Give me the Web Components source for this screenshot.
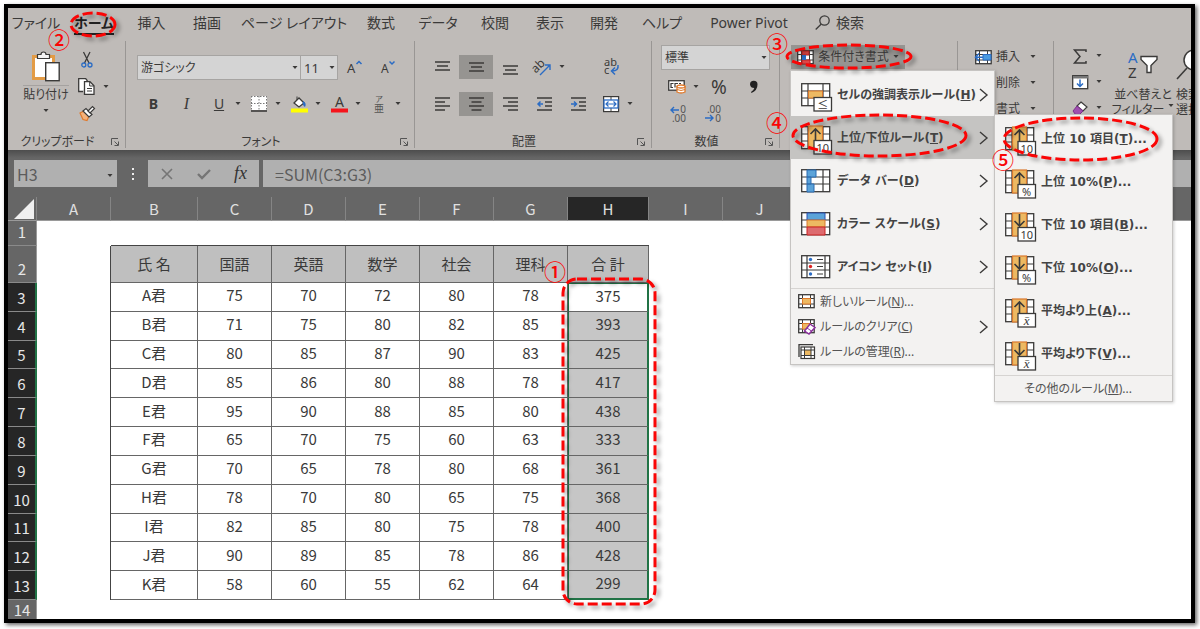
<!DOCTYPE html>
<html lang="ja">
<head>
<meta charset="utf-8">
<title>Excel - 条件付き書式</title>
<style>
  body {
    margin: 0;
    background: #fff;
    color: #3b3a39;
    font: 12px/16px "Noto Sans", "Noto Sans CJK JP", sans-serif;
    font-feature-settings: "palt";
  }
</style>
</head>
<body>
<excel-window></excel-window>

<script>
/* ---------- icons ---------- */
const K = '#3b3a39', B = '#2b6cc4';
const lines = (rows, x0 = 0) => rows.map(([x, y, w]) => `<path d="M${x0 + x} ${y}h${w}"/>`).join('');
const stroke = (inner, c = K, w = 1.5) => `<g fill="none" stroke="${c}" stroke-width="${w}">${inner}</g>`;

const bigGrid = `<rect x=".7" y=".7" width="28" height="22" fill="#fff" stroke="${K}" stroke-width="1.3"/>`;
const bigLines = stroke('<path d="M7 1v22M22 1v22M1 8h28M1 15h28"/>', K, 1.2);
const badge = t => `<rect x="13" y="14.5" width="17.5" height="13.5" fill="#fff" stroke="${K}" stroke-width="1.3"/>
  <text x="21.7" y="25.500" font-size="11" text-anchor="middle" fill="${K}">${t}</text>`;
const rank = (up, t) => bigGrid + bigLines +
  `<rect x="7.500" y="0" width="14" height="23" fill="#edb962" stroke="#d9782d" stroke-width="1.2"/>` +
  stroke(up ? '<path d="M14.500 14V3M9.500 8l5-5 5 5"/>' : '<path d="M14.500 1v11M9.500 8l5 5 5-5"/>', K, 1.6) + badge(t);
const xbar = '<tspan font-family="Liberation Serif" font-style="italic" font-size="13">x̄</tspan>';
const smallGrid = `<rect x=".7" y=".7" width="15.500" height="13" fill="#fff" stroke="${K}" stroke-width="1.3"/>
  <path d="M4.500 1v13M12.500 1v13M1 4.500h15M1 10h15" stroke="${K}" fill="none"/>`;

/* name: [width, height, markup] */
const ICONS = {
  paste: [28, 31, `<path d="M1.500 5.500h20v22h-20z" fill="#fff" stroke="#e39b45" stroke-width="3"/>
    <path d="M5.500 7.500v-4h3.500a2.500 2.500 0 0 1 5 0h3.500v4z" fill="#f4f4f4" stroke="${K}" stroke-width="1.2"/>
    <rect x="13.700" y="11.700" width="13.500" height="18" fill="#fff" stroke="${K}" stroke-width="1.4"/>`],
  cut: [12, 16, `<path d="M2.500 0l5.500 11M9 0L3.500 11" stroke="${K}" stroke-width="1.300" fill="none"/>
    <circle cx="2.800" cy="13" r="2" fill="none" stroke="${B}" stroke-width="1.300"/><circle cx="9" cy="13" r="2" fill="none" stroke="${B}" stroke-width="1.300"/>`],
  copy: [18, 17, `<path d="M5 13.500H.7V.7h7L9.500 3" fill="#fff" stroke="${K}" stroke-width="1.300"/>
    <path d="M6.500 3.700h5.500l4 4v8.600H6.500z" fill="#fff" stroke="${K}" stroke-width="1.300"/>
    <path d="M11.700 4v4H16M9 10.500h5M9 13h5" stroke="${K}" fill="none"/>`],
  brush: [16, 15, `<path d="M1 7l4-2 5 5-2 4.500-4-1z" fill="#f6b27a" stroke="#e07a2c" stroke-width="1.200"/>
    <path d="M4 5l3-2.500 6 6-3 2.500z" fill="#fff" stroke="${K}" stroke-width="1.200"/><path d="M9 5l4.500-4.500 2 2L11 7z" fill="#fff" stroke="${K}" stroke-width="1.200"/>`],
  launcher: [8, 8, stroke('<path d="M.5 7V.500H7M3.500 3.500L7 7M7.500 3.500v4h-4"/>', '#555', 1)],
  caret: [6, 4, `<path d="M.500 0h5L3 3z" fill="${K}"/>`],
  grow: [16, 16, `<text x="0" y="13" font-size="13" fill="${K}">A</text>` + stroke('<path d="M9.500 4L12 1.500 14.500 4"/>', B)],
  shrink: [16, 16, `<text x="1" y="13" font-size="12" fill="${K}">A</text>` + stroke('<path d="M9.500 1.500L12 4l2.500-2.500"/>', B)],
  borders: [16, 16, `<path d="M0 0h16v14H0z" fill="#fff"/>` + `<path d="M.5 0v14M15.500 0v14M0 .5h16M8 0v14M0 7.500h16" stroke="#777" stroke-dasharray="1.500 1.500" fill="none"/><path d="M0 15h16" stroke="${K}" stroke-width="1.600"/>`],
  fill: [17, 17, `<path d="M3 7l5-5 5 5-5 4z" fill="#fff" stroke="${K}" stroke-width="1.300"/><path d="M6 4V.500" stroke="${K}"/><path d="M12 5q4 2 2 6-3-2-2-6" fill="${B}"/><path d="M0 12.500h17v4H0z" fill="#ff0"/>`],
  fontcolor: [17, 17, `<text x="8.500" y="11" font-size="14" text-anchor="middle" fill="${K}">A</text><path d="M0 12.500h17v4H0z" fill="#f5141c"/>`],
  ruby: [12, 18, `<text x="6" y="7" font-size="8" text-anchor="middle" fill="#555">ア</text><text x="6" y="17" font-size="10" text-anchor="middle" fill="#555">亜</text>`],
  top: [15, 16, stroke(lines([[0, 3, 15], [2, 7, 11], [0, 11, 15]]))],
  middle: [15, 16, stroke(lines([[0, 4, 15], [2, 8, 11], [0, 12, 15]]))],
  bottom: [15, 16, stroke(lines([[0, 7, 15], [2, 11, 11], [0, 15, 15]]))],
  left: [15, 16, stroke(lines([[0, 2, 15], [0, 6, 10], [0, 10, 15], [0, 14, 10]]))],
  center: [15, 16, stroke(lines([[0, 2, 15], [2.5, 6, 10], [0, 10, 15], [2.5, 14, 10]]))],
  right: [15, 16, stroke(lines([[0, 2, 15], [5, 6, 10], [0, 10, 15], [5, 14, 10]]))],
  orient: [18, 18, `<text x="-1" y="11" font-size="12" fill="${K}" transform="rotate(-45 6 10)">ab</text>` + stroke('<path d="M6 17L16 7M11 7h5v5"/>', B, 1.400)],
  wrap: [16, 18, `<text x="0" y="8" font-size="11" fill="${K}">ab</text><text x="0" y="16" font-size="11" fill="${K}">c</text>` + stroke('<path d="M14 7q1 6-6 6M11 9.500L7.500 13l3.500 3.500"/>', B)],
  outdent: [15, 16, stroke(lines([[0, 2, 15], [8, 6, 7], [8, 10, 7], [0, 14, 15]])) + stroke('<path d="M6 8H1M3.500 5.500L1 8l2.500 2.500"/>', B)],
  indent: [15, 16, stroke(lines([[0, 2, 15], [8, 6, 7], [8, 10, 7], [0, 14, 15]])) + stroke('<path d="M0 8h5M3 5.500L5.500 8 3 10.500"/>', B)],
  merge: [16, 16, `<rect x=".6" y=".6" width="15" height="15" fill="#fff" stroke="${K}" stroke-width="1.200"/><path d="M8 0v4M8 12v4" stroke="${K}"/>
    <rect x="1" y="4" width="14" height="8" fill="#fff" stroke="${B}" stroke-width="1.300"/>` + stroke('<path d="M3 8h10M5.500 5.500L3 8l2.500 2.500M10.500 5.500L13 8l-2.500 2.500"/>', B, 1.200)],
  money: [18, 15, `<rect x=".7" y="1.700" width="15.500" height="9.500" fill="#fff" stroke="${K}" stroke-width="1.300"/>` + stroke('<path d="M5.500 4.500H3v4h2M7 8.500v-4h3M13 4.500h-2"/>', K, 1.200) +
    `<path d="M9 7.500v5.500q4 2 8 0V7.500z" fill="#fff" stroke="#e07a2c" stroke-width="1.300"/><ellipse cx="13" cy="7.500" rx="4" ry="1.500" fill="#fff" stroke="#e07a2c" stroke-width="1.300"/><path d="M9 10.500q4 2 8 0" fill="none" stroke="#e07a2c"/>`],
  percent: [18, 18, `<text x="9" y="16" font-size="19" text-anchor="middle" fill="${K}">%</text>`],
  comma: [10, 16, `<path d="M1 5.500a3.500 3.500 0 1 1 7.500 0q0 6-6 8.500l-.5-1q3-2 3.300-4Q1.500 9 1 5.500" fill="#222"/>`],
  decinc: [17, 18, `<text x="17" y="8" font-size="10" text-anchor="end" fill="#555">0</text><text x="17" y="17" font-size="10" text-anchor="end" fill="#555">.00</text>` + stroke('<path d="M10 5H2M5 2L2 5l3 3"/>', B, 1.400)],
  decdec: [17, 18, `<text x="17" y="8" font-size="10" text-anchor="end" fill="#555">.00</text><text x="17" y="17" font-size="10" text-anchor="end" fill="#555">0</text>` + stroke('<path d="M1 13h8M6 10l3 3-3 3"/>', B, 1.400)],
  cond: [17, 15, smallGrid + `<path d="M5 1h7v4H5zM5 10h8v4H5z" fill="#e04848" stroke="#b22"/><path d="M5 5h4v5H5z" fill="${B}"/>`],
  insert: [17, 15, smallGrid + `<path d="M8 4.500h8v5.500H8z" fill="#4c9be0" stroke="${B}"/><path d="M8 7.300H0M4 3.500L.5 7.300 4 11" stroke="${B}" stroke-width="1.500" fill="none"/>`],
  sigma: [14, 15, stroke('<path d="M13 3V1H1.500L7 7.500 1.500 14H13v-2"/>')],
  filldown: [17, 15, `<rect x=".7" y=".7" width="15" height="13" fill="#fff" stroke="${K}" stroke-width="1.300"/><path d="M1 1h15v2.500H1z" fill="#777"/>` + stroke('<path d="M8 4.500v7M5 8.500l3 3 3-3"/>', B)],
  eraser: [16, 14, `<path d="M9 1l6 5-4 4-6-5z" fill="#fff" stroke="${K}" stroke-width="1.200"/><path d="M5 5l6 5-3.500 3.500H3.500L1 10z" fill="#a04fb0" stroke="#7b2f8c"/>`],
  sort: [31, 30, `<text x="0" y="13" font-size="15" fill="${B}">A</text><text x="0" y="28" font-size="15" fill="${K}">Z</text>
    <path d="M13 6.500h16v3l-6 6v7h-4v-7l-6-6z" fill="#fff" stroke="${K}" stroke-width="1.400"/>`],
  find: [31, 30, `<path d="M11 18L1 29" stroke="${K}" stroke-width="1.600"/><circle cx="18" cy="10" r="10" fill="#fff" stroke="${K}" stroke-width="1.500"/>`],
  search: [15, 16, stroke('<circle cx="9.500" cy="5.500" r="4.700"/><path d="M6.300 9L.7 14.500"/>', K, 1.300)],
  cancel: [12, 12, stroke('<path d="M1 1l10 10M11 1L1 11"/>', '#757575', 1.600)],
  check: [14, 12, stroke('<path d="M1 6l4 4 8-8"/>', '#757575', 2.400)],
  chevron: [9, 14, stroke('<path d="M1 1l7 6-7 6"/>', K, 1.400)],
  hl: [30, 24, bigGrid + bigLines + `<rect x="7.500" y="8" width="14" height="7" fill="#edb962" stroke="#d9782d"/>` + badge('≤')],
  top10: [30, 24, rank(true, '10')], topp: [30, 24, rank(true, '%')],
  bot10: [30, 24, rank(false, '10')], botp: [30, 24, rank(false, '%')],
  above: [30, 24, rank(true, xbar)], below: [30, 24, rank(false, xbar)],
  bars: [30, 24, bigGrid + bigLines + `<path d="M6 1h9v7H6zM6 8h4v7H6zM6 15h7v8H6z" fill="#5ba3d9" stroke="#2a6ab0"/>`],
  scale: [30, 24, bigGrid + bigLines + `<path d="M6 1h18v7H6z" fill="#5ba3d9" stroke="#2a4fb0"/><path d="M6 8h18v7H6z" fill="#edb962" stroke="#d9782d"/><path d="M6 15h18v8H6z" fill="#dd6b6f" stroke="#c22"/>`],
  icons: [30, 24, bigGrid + stroke('<path d="M6 1v22M24 1v22M1 8h28M1 15h28"/>', K, 1.200) + `<circle cx="9.500" cy="4.500" r="1.700" fill="${B}"/><circle cx="9.500" cy="11.500" r="1.700" fill="#d22"/><circle cx="9.500" cy="19" r="1.700" fill="${B}"/>` + stroke('<path d="M16 4.500h6M16 11.500h6M16 19h6"/>', K, 1)],
  newrule: [17, 15, smallGrid + `<rect x="4.500" y="4.500" width="8" height="5.500" fill="#edb962" stroke="#e07a2c"/>`],
  clear: [17, 15, smallGrid + `<rect x="4.500" y="4.500" width="8" height="5.500" fill="#edb962" stroke="#e07a2c"/><path d="M12 5l5 3.500-6 6.500-4.500-3z" fill="#fff" stroke="#8a2f9c" stroke-width="1.500"/><path d="M9 9l4.500 3" stroke="#8a2f9c"/>`],
  manage: [17, 15, `<path d="M1 13V.700h14" fill="none" stroke="${K}" stroke-width="1.300"/><rect x="3" y="3" width="13.500" height="11.500" fill="#fff" stroke="${K}" stroke-width="1.200"/><rect x="6.500" y="6" width="6.500" height="5.500" fill="#edb962"/><path d="M6.500 3v11M13 3v11M3 6h13M3 11.500h13" stroke="${K}" fill="none"/>`],
};

const define = (name, html, setup) => {
  const template = document.createElement('template');
  template.innerHTML = html;
  customElements.define(name, class extends HTMLElement {
    constructor() {
      super();
      this.attachShadow({ mode: 'open' }).append(template.content.cloneNode(true));
    }
    connectedCallback() {
      if (setup && !this.ready) { this.ready = true; setup(this, this.shadowRoot); }
    }
  });
};

define('ui-icon', `<style>:host{display:inline-flex;flex:none}svg{display:block;overflow:visible;font-family:"Noto Sans","Noto Sans CJK JP",sans-serif;font-weight:400;font-style:normal}</style>`, (el, root) => {
  const [w, h, markup] = ICONS[el.getAttribute('name')];
  root.innerHTML += `<svg width="${w}" height="${h}" viewBox="0 0 ${w} ${h}" aria-hidden="true">${markup}</svg>`;
});

/* push button; "split" adds a drop-down arrow, "labelled" hugs its text */
define('tool-button', `
<style>
  :host { display: flex; }
  button { flex: 1; display: flex; align-items: center; justify-content: center; height: 24px; padding: 0; border: 0; background: none; color: inherit; font: inherit; font-feature-settings: inherit; white-space: nowrap; }
  :host([active]) button { background: #969491; }
  :host([split]) button { justify-content: flex-start; }
  .box { display: flex; align-items: center; justify-content: center; gap: 4px; min-width: 32px; }
  :host([labelled]) .box { min-width: 0; }
  :host([labelled]) button { gap: 10px; }
  .arrow { display: none; }
  :host([split]) .arrow { display: inline-flex; }
</style>
<button type="button"><span class="box"><span class="pic"></span><slot></slot></span><ui-icon class="arrow" name="caret"></ui-icon></button>`, (el, root) => {
  const icon = el.getAttribute('icon');
  if (icon) root.querySelector('.pic').outerHTML = `<ui-icon name="${icon}"></ui-icon>`;
  else root.querySelector('.pic').remove();
  if (el.title) root.querySelector('button').setAttribute('aria-label', el.title);
});

define('drop-list', `
<style>
  :host { display: grid; height: 25px; box-sizing: border-box; border: 1px solid #a6a4a2; background: #d4d4d4; align-items: center; }
  select { grid-area: 1 / 1; width: 100%; height: 100%; padding: 0 3px; border: 0; appearance: none; background: none; color: inherit; font: inherit; font-feature-settings: inherit; }
  ui-icon { grid-area: 1 / 1; justify-self: end; margin-right: 2px; pointer-events: none; }
</style>
<select></select><ui-icon name="caret"></ui-icon>`, (el, root) => {
  const select = root.querySelector('select');
  select.add(new Option(el.getAttribute('value')));
  select.setAttribute('aria-label', el.getAttribute('label'));
});

define('ribbon-tabs', `
<style>
  :host { display: grid; grid-template-columns: 56px 60px 55px 56px 118px 56px 58px 56px 54px 54px 62px 112px 1fr; height: 30px; align-items: center; font-size: 14px; line-height: 20px; white-space: nowrap; }
  a { justify-self: center; color: inherit; text-decoration: none; }
  a[aria-current] { font-weight: bold; color: #222; box-shadow: 0 2px #222; }
  button { display: flex; align-items: center; gap: 6px; padding: 0 0 0 10px; border: 0; background: none; color: inherit; font: inherit; }
</style>
<a href="#file">ファイル</a><a href="#home" aria-current="page">ホーム</a><a href="#insert">挿入</a><a href="#draw">描画</a><a href="#layout">ページ レイアウト</a><a href="#formulas">数式</a><a href="#data">データ</a><a href="#review">校閲</a><a href="#view">表示</a><a href="#developer">開発</a><a href="#help">ヘルプ</a><a href="#pivot">Power Pivot</a>
<button type="button"><ui-icon name="search"></ui-icon>検索</button>`);

define('ribbon-group', `
<style>
  :host { display: flex; flex-direction: column; flex: none; box-sizing: border-box; height: 107px; border-right: 1px solid #999694; }
  :host(:last-child) { border: 0; }
  .body { flex: 1; min-height: 0; }
  footer { display: grid; grid-template-columns: 1fr 16px; height: 14px; padding-right: 2px; align-items: center; justify-items: center; }
  button { display: flex; padding: 0; border: 0; background: none; }
</style>
<div class="body"><slot></slot></div>
<footer><span></span></footer>`, (el, root) => {
  const label = el.getAttribute('label');
  root.querySelector('span').textContent = label || '';
  if (label) root.querySelector('footer').insertAdjacentHTML('beforeend', `<button type="button" aria-label="${label}の設定"><ui-icon name="launcher"></ui-icon></button>`);
});

define('ribbon-bar', `
<style>
  :host { display: block; background: #bfbbb8; height: 142px; overflow: hidden; }
  .groups { display: flex; padding-top: 3px; }
  .row { display: flex; align-items: center; }
  .clip { width: 118px; } .font { width: 289px; } .align { width: 237px; } .number { width: 128px; } .styles { width: 178px; } .cells { width: 96px; } .edit { flex: 1; min-width: 0; }
  .clip-body { display: flex; padding: 5px 0 0 14px; gap: 1px; }
  .big { display: flex; flex: none; flex-direction: column; align-items: center; gap: 3px; padding: 5px 0 0; border: 0; background: none; color: inherit; font: inherit; font-feature-settings: inherit; white-space: nowrap; }
  .paste { width: 48px; }
  .paste span { border-top: 1px solid #a5a2a0; padding: 1px 0 3px; }
  .stack { display: grid; grid-auto-rows: 27px; align-items: center; justify-items: start; }
  .font-body { padding: 14px 0 0 11px; }
  .face { width: 164px; } .size { width: 38px; font-size: 13px; margin-left: -1px; }
  .tools { height: 24px; margin-top: 12px; }
  .w33 { width: 33px; } .w40 { width: 40px; }
  .grid { display: grid; grid-template-columns: repeat(6, 34px); row-gap: 13px; padding: 14px 0 0 10px; }
  .num-body { padding: 4px 9px 0; }
  .num-body .row { height: 27px; gap: 2px; }
  .num-body drop-list + .row { margin-top: 3px; }
  .styles-body { display: flex; padding: 4px 0 0 11px; }
  .cond { width: 114px; }
  .cells-body { padding: 3px 0 0 17px; display: grid; grid-auto-rows: 26px; align-items: center; justify-items: start; }
  .edit-body { display: flex; padding-top: 2px; }
  .edit-col { display: grid; flex: none; grid-auto-rows: 26px; align-items: center; width: 60px; padding-left: 10px; box-sizing: border-box; }
  .edit-body .big { padding-top: 7px; gap: 0; line-height: 15px; }
  .edit-body .big ui-icon:first-child { margin-bottom: 7px; }
  .edit-body .sort { width: 58px; } .edit-body .find { margin-left: 4px; align-items: flex-start; }
  b { font-size: 14px; } i { font: italic 16px "Liberation Serif", serif; } u { font-size: 14px; }
  .line { display: flex; align-items: center; gap: 4px; }
</style>
<ribbon-tabs></ribbon-tabs>
<div class="groups">
  <ribbon-group class="clip" label="クリップボード"><div class="clip-body">
    <button class="big paste" type="button"><ui-icon name="paste"></ui-icon><span>貼り付け</span><ui-icon name="caret"></ui-icon></button>
    <div class="stack">
      <tool-button icon="cut" title="切り取り"></tool-button>
      <tool-button class="w40" icon="copy" split title="コピー"></tool-button>
      <tool-button icon="brush" title="書式のコピー"></tool-button>
    </div>
  </div></ribbon-group>
  <ribbon-group class="font" label="フォント"><div class="font-body">
    <div class="row"><drop-list class="face" label="フォント" value="游ゴシック"></drop-list><drop-list class="size" label="フォント サイズ" value="11"></drop-list>
      <tool-button class="w33" icon="grow" title="フォント サイズの拡大"></tool-button><tool-button class="w33" icon="shrink" title="フォント サイズの縮小"></tool-button></div>
    <div class="row tools"><tool-button class="w33"><b>B</b></tool-button><tool-button class="w33"><i>I</i></tool-button><tool-button class="w40" split><u>U</u></tool-button>
      <tool-button class="w40" icon="borders" split title="罫線"></tool-button><tool-button class="w40" icon="fill" split title="塗りつぶしの色"></tool-button><tool-button class="w40" icon="fontcolor" split title="フォントの色"></tool-button><tool-button class="w40" icon="ruby" split title="ふりがな"></tool-button></div>
  </div></ribbon-group>
  <ribbon-group class="align" label="配置"><div class="grid">
    <tool-button icon="top" title="上揃え"></tool-button><tool-button icon="middle" active title="上下中央揃え"></tool-button><tool-button icon="bottom" title="下揃え"></tool-button><tool-button icon="orient" split title="方向"></tool-button><span></span><tool-button icon="wrap" title="折り返して全体を表示する"></tool-button>
    <tool-button icon="left" title="左揃え"></tool-button><tool-button icon="center" active title="中央揃え"></tool-button><tool-button icon="right" title="右揃え"></tool-button><tool-button icon="outdent" title="インデントを減らす"></tool-button><tool-button icon="indent" title="インデントを増やす"></tool-button><tool-button class="w40" icon="merge" split title="セルを結合して中央揃え"></tool-button>
  </div></ribbon-group>
  <ribbon-group class="number" label="数値"><div class="num-body">
    <drop-list label="表示形式" value="標準"></drop-list>
    <div class="row"><tool-button class="w40" icon="money" split title="通貨表示形式"></tool-button><tool-button class="w33" icon="percent" title="パーセント スタイル"></tool-button><tool-button class="w33" icon="comma" title="桁区切りスタイル"></tool-button></div>
    <div class="row"><tool-button class="w33" icon="decinc" title="小数点以下の表示桁数を増やす"></tool-button><tool-button class="w33" icon="decdec" title="小数点以下の表示桁数を減らす"></tool-button></div>
  </div></ribbon-group>
  <ribbon-group class="styles"><div class="styles-body"><tool-button class="cond" icon="cond" active labelled>条件付き書式<ui-icon name="caret"></ui-icon></tool-button></div></ribbon-group>
  <ribbon-group class="cells"><div class="cells-body">
    <tool-button icon="insert" labelled split>挿入</tool-button><tool-button icon="insert" labelled split>削除</tool-button><tool-button icon="insert" labelled split>書式</tool-button>
  </div></ribbon-group>
  <ribbon-group class="edit"><div class="edit-body">
    <div class="edit-col"><tool-button icon="sigma" split title="オート SUM"></tool-button><tool-button icon="filldown" split title="フィル"></tool-button><tool-button icon="eraser" split title="クリア"></tool-button></div>
    <button class="big sort" type="button"><ui-icon name="sort"></ui-icon><span>並べ替えと</span><span class="line">フィルター<ui-icon name="caret"></ui-icon></span></button>
    <button class="big find" type="button"><ui-icon name="find"></ui-icon><span>検索と</span><span>選択</span></button>
  </div></ribbon-group>
</div>`);

define('formula-bar', `
<style>
  :host { display: flex; height: 47px; box-sizing: border-box; padding: 10px 0; background: linear-gradient(#4d4d4d, #666 8px); color: #5c5c5c; font-size: 16px; font-family: "Noto Sans CJK JP", sans-serif; font-feature-settings: normal; }
  .field { display: flex; align-items: center; background: #b0b0b0; box-sizing: border-box; }
  .name { width: 103px; margin-left: 6px; padding-right: 4px; }
  input { flex: 1; min-width: 0; height: 100%; border: 0; padding: 0 3px; background: none; color: inherit; font: inherit; }
  .dots { width: 31px; display: grid; place-items: center; }
  .dots i { width: 2px; height: 2px; background: #eee; box-shadow: 0 -5px #eee, 0 5px #eee; }
  .acts { width: 111px; margin-right: 4px; }
  .acts button { flex: 1; display: grid; place-items: center; border: 0; padding: 0; background: none; color: #333; font: italic 18px "Liberation Serif", serif; }
  .formula { flex: 1; } .formula input { padding: 0 12px; }
  button { border: 0; padding: 0; background: none; }
</style>
<div class="field name"><input aria-label="名前ボックス" value="H3"><button type="button" aria-label="名前の一覧"><ui-icon name="caret"></ui-icon></button></div>
<div class="dots"><i></i></div>
<div class="field acts"><button type="button" aria-label="キャンセル"><ui-icon name="cancel"></ui-icon></button><button type="button" aria-label="入力"><ui-icon name="check"></ui-icon></button><button type="button">fx</button></div>
<div class="field formula"><input aria-label="数式バー" value="=SUM(C3:G3)"></div>`);

const HEAD = ['氏 名', '国語', '英語', '数学', '社会', '理科', '合 計'];
const MARKS = [
  ['A君', 75, 70, 72, 80, 78], ['B君', 71, 75, 80, 82, 85], ['C君', 80, 85, 87, 90, 83], ['D君', 85, 86, 80, 88, 78],
  ['E君', 95, 90, 88, 85, 80], ['F君', 65, 70, 75, 60, 63], ['G君', 70, 65, 78, 80, 68], ['H君', 78, 70, 80, 65, 75],
  ['I君', 82, 85, 80, 75, 78], ['J君', 90, 89, 85, 78, 86], ['K君', 58, 60, 55, 62, 64],
];

define('sheet-grid', `
<style>
  :host { display: block; flex: 1; min-height: 0; background: #fff; overflow: hidden; color: #3a3a3a; font: 15px/18px "Noto Sans CJK JP", sans-serif; font-feature-settings: normal; }
  table { width: 100%; height: 100%; table-layout: fixed; border-collapse: separate; border-spacing: 0; }
  th, td { padding: 0; text-align: center; font-weight: normal; white-space: pre; }
  thead th { height: 24px; box-sizing: border-box; background: #666; color: #e0e0e0; border-right: 1px solid #858585; border-bottom: 1px solid #9a9a9a; }
  thead th:last-child { border-right: 0; }
  thead th.on { background: #262626; }
  tbody th { box-sizing: border-box; padding-bottom: 4px; background: #666; color: #e6e6e6; border-right: 1px solid #9a9a9a; border-bottom: 1px solid #8a8a8a; vertical-align: bottom; }
  tbody th.on { background: #262626; border-right: 2px solid #217346; }
  tr.r1 { height: 25px; } tr.r2 { height: 37px; } tr.r14 { height: 19px; }
  .r14 th { padding: 0; border-bottom: 0; }
  td.box { padding-bottom: 3px; border-right: 1px solid #666; border-bottom: 1px solid #666; }
  td.edge { border-right: 1px solid #444; }
  td.lid { border-bottom: 1px solid #444; }
  td.head { padding: 0; background: #bfbfbf; }
  td.total { background: #c6c6c6; border-left: 1px solid #217346; border-right: 2px solid #217346; }
  td.first { background: #fff; border-top: 1px solid #217346; }
  td.last { border-bottom: 2px solid #217346; }
  svg { display: block; margin-left: auto; }
</style>
<table></table>`, (el, root) => {
  const widths = [29, 74, 87, 74, 74, 74, 74, 74, 81, 74, 74];
  const letters = 'ABCDEFGHIJ'.split('');
  const blank = n => '<td></td>'.repeat(n);
  let html = '<colgroup>' + widths.map(w => `<col style="width:${w}px">`).join('') + '<col></colgroup>';
  html += '<thead><tr><th><svg width="22" height="20" viewBox="0 0 22 20" aria-hidden="true"><path d="M20 0v20H0z" fill="#f0f0f0"/></svg></th>' +
    letters.map(l => `<th scope="col"${l === 'H' ? ' class="on"' : ''}>${l}</th>`).join('') + '<th></th></tr></thead><tbody>';
  html += `<tr class="r1"><th scope="row">1</th><td></td>${'<td class="lid"></td>'.repeat(7)}${blank(3)}</tr>`;
  html += `<tr class="r2"><th scope="row">2</th><td class="edge"></td>${HEAD.map(h => `<td class="box head">${h}</td>`).join('')}${blank(3)}</tr>`;
  MARKS.forEach((row, i) => {
    const sum = row.slice(1).reduce((a, b) => a + b);
    const extra = i === 0 ? ' first' : i === MARKS.length - 1 ? ' last' : '';
    html += `<tr><th scope="row" class="on">${i + 3}</th><td class="edge"></td>${row.map(v => `<td class="box">${v}</td>`).join('')}<td class="box total${extra}">${sum}</td>${blank(3)}</tr>`;
  });
  html += `<tr class="r14"><th scope="row">14</th>${blank(11)}</tr></tbody>`;
  root.querySelector('table').innerHTML = html;
});

define('popup-menu', `
<style>:host { display: block; position: absolute; box-sizing: border-box; background: #f3f2f1; border: 1px solid #c6c4c2; padding: 2px 0 0; box-shadow: 1px 1px 3px rgba(0,0,0,.2); }</style>
<slot></slot>`);

define('menu-item', `
<style>
  :host { display: block; }
  :host([ruled]) { border-top: 1px solid #d6d4d2; }
  button { display: flex; align-items: center; width: 100%; height: 25px; gap: 5px; padding: 0 6px 0 7px; border: 0; background: none; color: #555; font: inherit; font-feature-settings: inherit; text-align: left; white-space: nowrap; }
  :host([large]) button { height: 43px; gap: 6px; padding-left: 10px; color: #444; font-weight: bold; font-family: "DejaVu Sans", "Noto Sans CJK JP", sans-serif; }
  :host([active]) button { background: #c5c4c2; }
  :host([plain]) button { padding-left: 29px; }
  .label { flex: 1; min-width: 0; }
</style>
<button type="button"><span class="label"><slot></slot></span></button>`, (el, root) => {
  const button = root.querySelector('button');
  if (el.hasAttribute('icon')) button.insertAdjacentHTML('afterbegin', `<ui-icon name="${el.getAttribute('icon')}"></ui-icon>`);
  if (el.hasAttribute('more')) button.insertAdjacentHTML('beforeend', '<ui-icon name="chevron"></ui-icon>');
});

define('callout-ring', `
<style>
  :host { display: block; position: absolute; pointer-events: none; }
  svg { display: block; width: 100%; height: 100%; overflow: visible; filter: drop-shadow(3px 3px 2px rgba(0,0,0,.4)); fill: none; stroke: #fa0505; stroke-width: 3px; stroke-dasharray: 10 4; }
</style>
<svg aria-hidden="true"></svg>`, (el, root) => {
  root.querySelector('svg').innerHTML = el.hasAttribute('rounded')
    ? '<rect width="100%" height="100%" rx="14"/>'
    : '<ellipse cx="50%" cy="50%" rx="50%" ry="50%"/>';
});

define('callout-number', `
<style>:host { display: block; position: absolute; width: 22px; text-align: center; color: #fa0505; font: 500 22px/22px "Noto Sans CJK JP", sans-serif; pointer-events: none; }</style>
<slot></slot>`);

define('excel-window', `
<style>
  :host { position: relative; display: flex; flex-direction: column; box-sizing: border-box; height: calc(100vh - 10px); margin: 4px 5px 6px 4px; border: 4px solid #000; box-shadow: 2px 2px 4px rgba(0,0,0,.6); }
  .rules { left: 782px; top: 62px; width: 205px; }
  .ranks { left: 986px; top: 106px; width: 179px; }
  .ring-home { left: 63px; top: 5px; width: 44px; height: 23px; }
  .ring-cond { left: 779px; top: 37px; width: 124px; height: 23px; }
  .ring-rank { left: 785px; top: 107px; width: 173px; height: 41px; }
  .ring-top { left: 996px; top: 110px; width: 153px; height: 42px; }
  .ring-total { left: 555px; top: 271px; width: 92px; height: 325px; }
  .n1 { left: 536px; top: 251px; } .n2 { left: 40px; top: 19px; } .n3 { left: 758px; top: 23px; } .n4 { left: 758px; top: 102px; } .n5 { left: 984px; top: 139px; }
</style>
<ribbon-bar></ribbon-bar>
<formula-bar></formula-bar>
<sheet-grid></sheet-grid>
<popup-menu class="rules">
  <menu-item large more icon="hl">セルの強調表示ルール(<u>H</u>)</menu-item>
  <menu-item large more active icon="top10">上位/下位ルール(<u>T</u>)</menu-item>
  <menu-item large more icon="bars">データ バー(<u>D</u>)</menu-item>
  <menu-item large more icon="scale">カラー スケール(<u>S</u>)</menu-item>
  <menu-item large more icon="icons">アイコン セット(<u>I</u>)</menu-item>
  <menu-item ruled icon="newrule">新しいルール(<u>N</u>)...</menu-item>
  <menu-item more icon="clear">ルールのクリア(<u>C</u>)</menu-item>
  <menu-item icon="manage">ルールの管理(<u>R</u>)...</menu-item>
</popup-menu>
<popup-menu class="ranks">
  <menu-item large icon="top10">上位 10 項目(<u>T</u>)...</menu-item>
  <menu-item large icon="topp">上位 10%(<u>P</u>)...</menu-item>
  <menu-item large icon="bot10">下位 10 項目(<u>B</u>)...</menu-item>
  <menu-item large icon="botp">下位 10%(<u>O</u>)...</menu-item>
  <menu-item large icon="above">平均より上(<u>A</u>)...</menu-item>
  <menu-item large icon="below">平均より下(<u>V</u>)...</menu-item>
  <menu-item ruled plain>その他のルール(<u>M</u>)...</menu-item>
</popup-menu>
<callout-ring class="ring-home"></callout-ring>
<callout-ring class="ring-cond"></callout-ring>
<callout-ring class="ring-rank"></callout-ring>
<callout-ring class="ring-top"></callout-ring>
<callout-ring class="ring-total" rounded></callout-ring>
<callout-number class="n1">①</callout-number>
<callout-number class="n2">②</callout-number>
<callout-number class="n3">③</callout-number>
<callout-number class="n4">④</callout-number>
<callout-number class="n5">⑤</callout-number>`);
</script>
</body>
</html>
